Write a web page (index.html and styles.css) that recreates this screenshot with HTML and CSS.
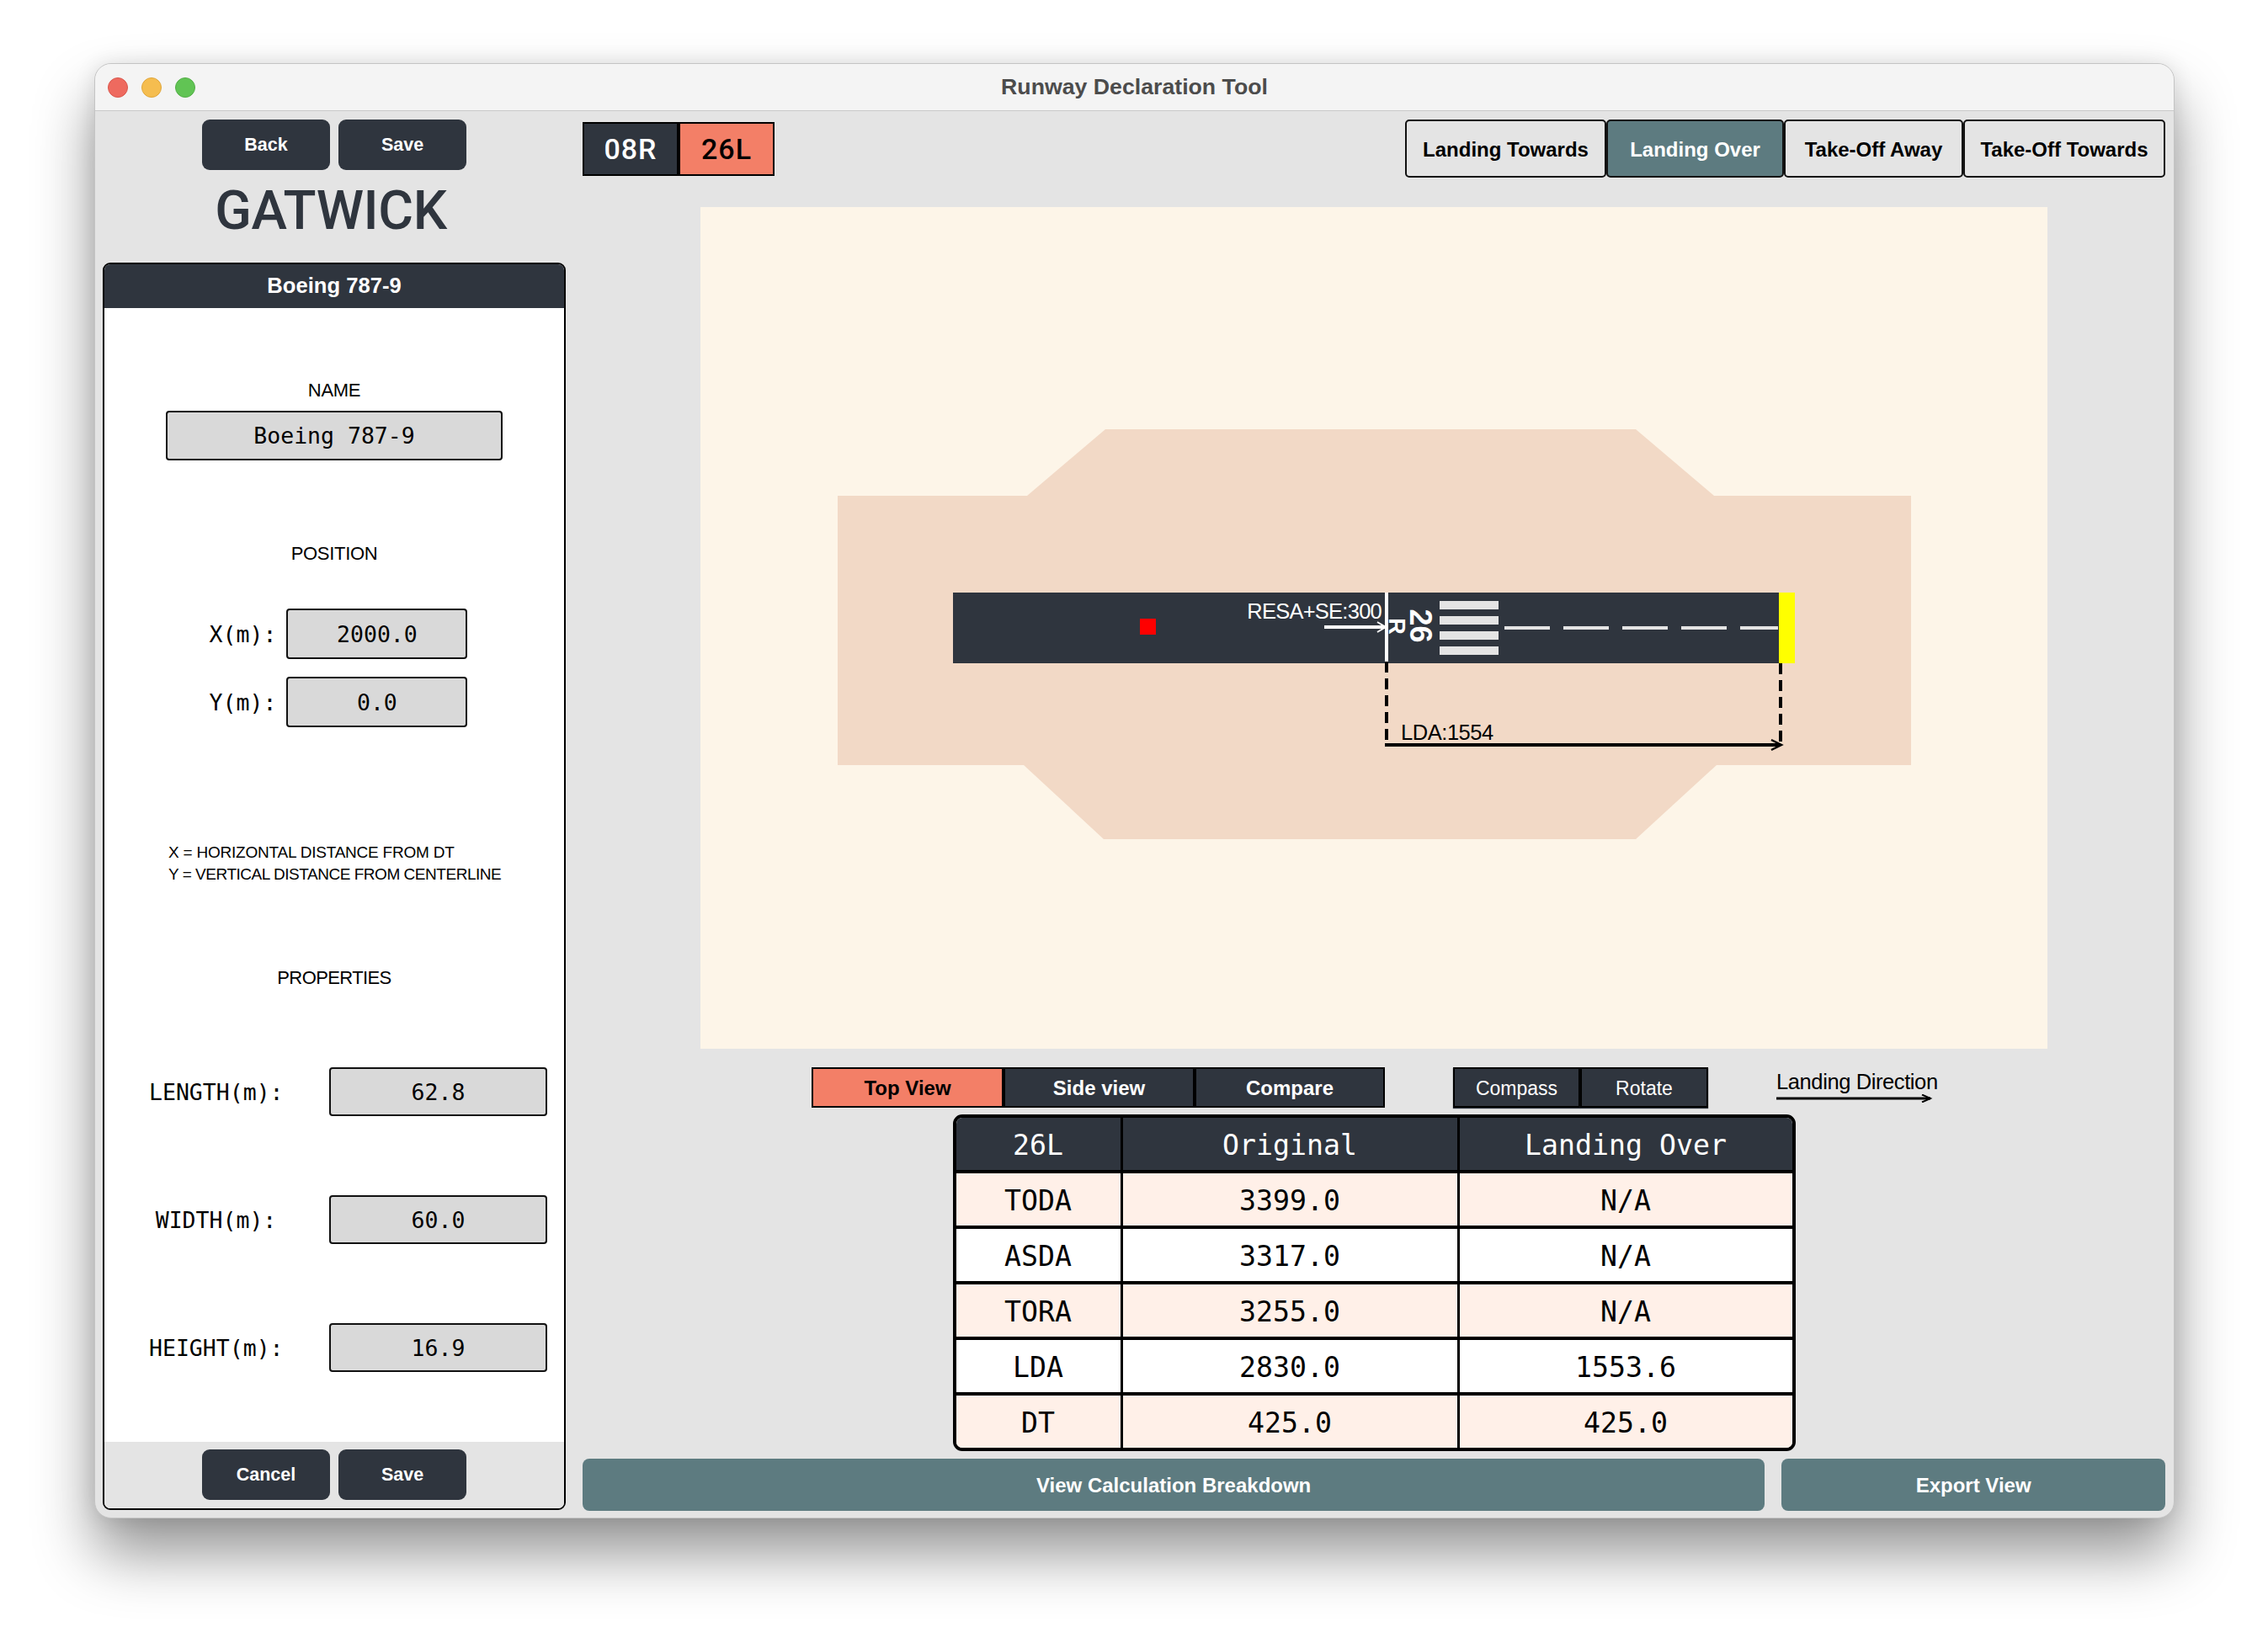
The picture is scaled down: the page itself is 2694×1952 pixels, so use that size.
FILE: index.html

```html
<!DOCTYPE html>
<html lang="en">
    <head>
        <meta charset="UTF-8" />
        <title>Runway Declaration Tool</title>
        <link rel="stylesheet" href="styles.css">
    </head>
    <body>
        <div class="window">
            <div class="titlebar">
                <div class="lights">
                    <span class="light red"></span>
                    <span class="light yellow"></span>
                    <span class="light green"></span>
                </div>
                <div class="window-title">Runway Declaration Tool</div>
            </div>

            <div class="content">
                <div class="sidebar">
                    <div class="btn-row">
                        <button class="dark-btn">Back</button>
                        <button class="dark-btn">Save</button>
                    </div>
                    <h1 class="airport">GATWICK</h1>

                    <div class="panel">
                        <div class="panel-head">Boeing 787-9</div>
                        <div class="panel-body">
                            <div class="caption name-caption">NAME</div>
                            <div class="field name-field">Boeing 787-9</div>

                            <div class="caption position-caption">POSITION</div>
                            <div class="pos-row first-pos">
                                <span class="mono-label">X(m):</span>
                                <div class="field pos-field">2000.0</div>
                            </div>
                            <div class="pos-row second-pos">
                                <span class="mono-label">Y(m):</span>
                                <div class="field pos-field">0.0</div>
                            </div>

                            <div class="note">
                                <div class="note-x">X = HORIZONTAL DISTANCE FROM DT</div>
                                <div class="note-y">Y = VERTICAL DISTANCE FROM CENTERLINE</div>
                            </div>

                            <div class="caption props-caption">PROPERTIES</div>
                            <div class="prop-row first-prop">
                                <span class="mono-label">LENGTH(m):</span>
                                <div class="field">62.8</div>
                            </div>
                            <div class="prop-row">
                                <span class="mono-label">WIDTH(m):</span>
                                <div class="field">60.0</div>
                            </div>
                            <div class="prop-row">
                                <span class="mono-label">HEIGHT(m):</span>
                                <div class="field">16.9</div>
                            </div>
                        </div>
                        <div class="panel-foot">
                            <button class="dark-btn">Cancel</button>
                            <button class="dark-btn">Save</button>
                        </div>
                    </div>
                </div>

                <div class="main">
                    <div class="top-row">
                        <div class="runway-toggle">
                            <div class="rw rw-off">08R</div>
                            <div class="rw rw-on">26L</div>
                        </div>
                        <div class="tabs">
                            <button class="tab">Landing Towards</button>
                            <button class="tab tab-on">Landing Over</button>
                            <button class="tab">Take-Off Away</button>
                            <button class="tab">Take-Off Towards</button>
                        </div>
                    </div>

                    <svg class="canvas" viewBox="832 246 1600 1000" xmlns="http://www.w3.org/2000/svg">
                        <rect x="832" y="246" width="1600" height="1000" fill="#fdf5e8"/>
                        <polygon fill="#f2d9c6" points="995,589 1220,589 1313,510 1943,510 2036,589 2270,589 2270,909 2039,909 1943,997 1311,997 1216,909 995,909"/>
                        <rect x="1132" y="704" width="982" height="84" fill="#2f353e"/>
                        <rect x="2113" y="704" width="19" height="84" fill="#ffff00"/>
                        <rect x="1354" y="735" width="19" height="19" fill="#ff0000"/>

                        <g fill="#e4e4e4">
                            <rect x="1710" y="714" width="70" height="10"/>
                            <rect x="1710" y="732" width="70" height="10"/>
                            <rect x="1710" y="750" width="70" height="10"/>
                            <rect x="1710" y="768" width="70" height="10"/>
                            <rect x="1787" y="744" width="54" height="4"/>
                            <rect x="1857" y="744" width="54" height="4"/>
                            <rect x="1927" y="744" width="54" height="4"/>
                            <rect x="1997" y="744" width="54" height="4"/>
                            <rect x="2067" y="744" width="45" height="4"/>
                        </g>

                        <text class="rw-num" transform="translate(1675,743.5) rotate(90)" font-size="36">26</text>
                        <text class="rw-num" transform="translate(1650,744) rotate(90)" font-size="27">R</text>

                        <line x1="1647" y1="704" x2="1647" y2="786" stroke="#fff" stroke-width="4"/>
                        <line x1="1573" y1="745" x2="1645" y2="745" stroke="#fff" stroke-width="4"/>
                        <polyline points="1636,739 1646,745 1636,751" fill="none" stroke="#fff" stroke-width="2"/>
                        <text class="dia-text resa-text" x="1641" y="735" text-anchor="end" fill="#fff">RESA+SE:300</text>

                        <line x1="1647" y1="786" x2="1647" y2="885" stroke="#000" stroke-width="4" stroke-dasharray="13 7"/>
                        <line x1="2115" y1="788" x2="2115" y2="885" stroke="#000" stroke-width="4" stroke-dasharray="13 7"/>
                        <line x1="1645" y1="885" x2="2115" y2="885" stroke="#000" stroke-width="4"/>
                        <polyline points="2104,879 2116,885 2104,891" fill="none" stroke="#000" stroke-width="2.5"/>
                        <text class="dia-text lda-text" x="1664" y="879" fill="#000">LDA:1554</text>
                    </svg>

                    <div class="view-row">
                        <div class="views">
                            <button class="seg seg-on">Top View</button>
                            <button class="seg">Side view</button>
                            <button class="seg">Compare</button>
                        </div>
                        <div class="tools">
                            <button class="seg seg-thin">Compass</button>
                            <button class="seg seg-thin">Rotate</button>
                        </div>
                        <div class="direction">
                            <div class="direction-text">Landing Direction</div>
                            <svg class="direction-arrow" viewBox="0 0 186 10" xmlns="http://www.w3.org/2000/svg">
                                <line x1="0" y1="5" x2="183" y2="5" stroke="#000" stroke-width="3"/>
                                <polyline points="173,0.5 183,5 173,9.5" fill="none" stroke="#000" stroke-width="2"/>
                            </svg>
                        </div>
                    </div>

                    <table class="dist-table">
                        <tr class="head">
                            <th>26L</th>
                            <th>Original</th>
                            <th>Landing Over</th>
                        </tr>
                        <tr class="tint"><td>TODA</td><td>3399.0</td><td>N/A</td></tr>
                        <tr><td>ASDA</td><td>3317.0</td><td>N/A</td></tr>
                        <tr class="tint"><td>TORA</td><td>3255.0</td><td>N/A</td></tr>
                        <tr><td>LDA</td><td>2830.0</td><td>1553.6</td></tr>
                        <tr class="tint"><td>DT</td><td>425.0</td><td>425.0</td></tr>
                    </table>

                    <div class="bottom-row">
                        <button class="teal-btn breakdown">View Calculation Breakdown</button>
                        <button class="teal-btn export">Export View</button>
                    </div>
                </div>
            </div>
        </div>
    </body>
</html>
```

FILE: styles.css

```css
html {
    height: 100%;
}

body {
    box-sizing: border-box;
    margin: 0;
    min-height: 1952px;
    padding: 75px 0 0 112px;
    background-color: #fff;
    font-family: "Liberation Sans", Arial, sans-serif;
    overflow: hidden;
}

button {
    font-family: "Liberation Sans", Arial, sans-serif;
    padding: 0;
    border: none;
}

.window {
    box-sizing: border-box;
    width: 2471px;
    height: 1729px;
    background-color: #e4e4e4;
    border: 1px solid #c4c4c4;
    border-radius: 20px;
    box-shadow: 0 42px 70px rgba(0, 0, 0, 0.42), 0 0 24px rgba(0, 0, 0, 0.1);
    overflow: hidden;
}

/* title bar */
.titlebar {
    box-sizing: border-box;
    height: 56px;
    display: flex;
    align-items: center;
    justify-content: center;
    position: relative;
    background-color: #f4f4f4;
    border-bottom: 1px solid #c8c8c8;
}

.lights {
    position: absolute;
    left: 15px;
    top: 16px;
    display: flex;
    gap: 16px;
}

.light {
    box-sizing: border-box;
    width: 24px;
    height: 24px;
    border-radius: 50%;
}

.red { background-color: #ee6a5f; border: 1px solid #d9574d; }
.yellow { background-color: #f5bd4f; border: 1px solid #dfa63c; }
.green { background-color: #61c454; border: 1px solid #53ad47; }

.window-title {
    font-size: 26.7px;
    font-weight: bold;
    color: #4c4c4c;
}

.content {
    display: flex;
}

/* left column */
.sidebar {
    box-sizing: border-box;
    width: 579px;
    padding: 10px 20px 0 9px;
}

.btn-row {
    display: flex;
    justify-content: center;
    gap: 10px;
}

.dark-btn {
    width: 152px;
    height: 60px;
    padding-top: 1px;
    background-color: #2f353e;
    color: #fff;
    font-size: 21.5px;
    font-weight: bold;
    border-radius: 9px;
}

.airport {
    margin: 0 8px 16px 0;
    height: 94px;
    padding-top: 2px;
    box-sizing: border-box;
    line-height: 94px;
    text-align: center;
    font-family: "Roboto", sans-serif;
    font-size: 64px;
    font-weight: 500;
    letter-spacing: -0.4px;
    color: #2f353e;
}

.panel {
    box-sizing: border-box;
    width: 550px;
    height: 1482px;
    display: flex;
    flex-direction: column;
    border: 2.5px solid #000;
    border-radius: 9px;
    overflow: hidden;
    background-color: #fff;
}

.panel-head {
    height: 52px;
    line-height: 50px;
    flex: none;
    text-align: center;
    background-color: #2f353e;
    color: #fff;
    font-size: 25.6px;
    font-weight: bold;
}

.panel-body {
    flex: 1;
    display: flex;
    flex-direction: column;
    align-items: center;
}

.caption {
    height: 30px;
    line-height: 30px;
    font-size: 22px;
    letter-spacing: -0.3px;
    color: #000;
}

.name-caption { margin-top: 83px; }
.name-caption + .name-field { margin-top: 9px; }
.position-caption { margin-top: 96px; }
.props-caption { margin-top: 95px; letter-spacing: -0.6px; }

.field {
    box-sizing: border-box;
    display: flex;
    align-items: center;
    justify-content: center;
    height: 59px;
    background-color: #d9d9d9;
    border: 2.5px solid #111;
    border-radius: 4px;
    font-family: "DejaVu Sans Mono", monospace;
    font-size: 26.5px;
    color: #000;
}

.name-field {
    width: 400px;
}

.mono-label {
    font-family: "DejaVu Sans Mono", monospace;
    font-size: 26.5px;
    color: #000;
    text-align: center;
    white-space: nowrap;
}

.pos-row {
    display: flex;
    align-items: center;
    gap: 12px;
    padding-left: 10px;
}

.first-pos { margin-top: 50px; }
.second-pos { margin-top: 21px; }

.pos-field {
    width: 215px;
    height: 60px;
}

.note {
    align-self: flex-start;
    margin: 136px 0 0 76px;
    font-size: 19px;
    line-height: 26px;
    color: #000;
}

.note-x { letter-spacing: -0.22px; }
.note-y { letter-spacing: -0.47px; }

.prop-row {
    align-self: flex-start;
    display: grid;
    grid-template-columns: 159px 259px;
    column-gap: 55px;
    align-items: center;
    margin: 94px 0 0 53px;
}

.first-prop { margin-top: 91px; }

.prop-row .field {
    height: 58px;
}

.panel-foot {
    flex: none;
    height: 79px;
    box-sizing: border-box;
    display: flex;
    justify-content: center;
    gap: 10px;
    padding-top: 9px;
    background-color: #e4e4e4;
}

/* main column */
.main {
    width: 1880px;
    padding-top: 10px;
}

.top-row {
    height: 69px;
    display: flex;
    align-items: center;
    justify-content: space-between;
}

.runway-toggle {
    display: flex;
    box-sizing: border-box;
    width: 228px;
    height: 64px;
    border: 2px solid #000;
}

.rw {
    flex: 1;
    display: flex;
    align-items: center;
    justify-content: center;
    font-family: "Roboto", sans-serif;
    font-size: 34px;
    font-weight: 500;
    letter-spacing: 1px;
}

.rw-off {
    background-color: #2f353e;
    color: #fff;
    border-right: 4px solid #000;
}

.rw-on {
    background-color: #f37f67;
    color: #000;
}

.tabs {
    display: grid;
    grid-template-columns: 239px 211px 213px 240px;
    height: 69px;
}

.tab {
    box-sizing: border-box;
    padding-top: 2px;
    background-color: #e4e4e4;
    border: 2.5px solid #111;
    border-radius: 5px;
    font-size: 24px;
    font-weight: bold;
    color: #000;
}

.tab-on {
    background-color: #5d7b80;
    color: #fff;
}

.canvas {
    display: block;
    width: 1600px;
    height: 1000px;
    margin: 35px auto 0;
}

.dia-text {
    font-family: "Liberation Sans", Arial, sans-serif;
    font-size: 25.5px;
}

.resa-text { letter-spacing: -0.75px; }
.lda-text { letter-spacing: -0.45px; }

.rw-num {
    font-family: "Liberation Sans", Arial, sans-serif;
    font-weight: bold;
    fill: #fff;
    text-anchor: middle;
}

.view-row {
    display: flex;
    gap: 81px;
    height: 48px;
    margin-top: 22px;
    padding-left: 272px;
}

.views,
.tools {
    display: grid;
    height: 48px;
    border: none;
}

.views { grid-template-columns: 228px 227px 226px; }
.tools { grid-template-columns: 151px 152px; }

.seg {
    box-sizing: border-box;
    padding-top: 2px;
    background-color: #2f353e;
    border: 2.5px solid #000;
    color: #fff;
    font-size: 24px;
    font-weight: bold;
}

.seg-on {
    background-color: #f37f67;
    color: #000;
}

.seg-thin {
    font-size: 23px;
    font-weight: normal;
    box-shadow: 0 1px 1px #2f353e;
}

.direction {
    width: 192px;
}

.direction-text {
    height: 34px;
    line-height: 34px;
    font-size: 25.5px;
    letter-spacing: -0.4px;
    white-space: nowrap;
}

.direction-arrow {
    display: block;
    width: 186px;
    height: 10px;
    margin-top: -2px;
}

/* distances table */
.dist-table {
    box-sizing: border-box;
    width: 1001px;
    height: 399px;
    margin: 8px auto 0;
    border-spacing: 0;
    table-layout: fixed;
    border: 4px solid #000;
    border-radius: 11px;
    font-family: "DejaVu Sans Mono", monospace;
    font-size: 33.2px;
    font-weight: normal;
    color: #000;
    background-color: #fff;
}

.dist-table th,
.dist-table td {
    height: 60px;
    padding: 2px 0 0;
    text-align: center;
    font-weight: normal;
    border-top: 4px solid #000;
    border-left: 3px solid #000;
}

.dist-table th:first-child,
.dist-table td:first-child {
    width: 195px;
    border-left: none;
}

.dist-table th:nth-child(2) { width: 397px; }

.dist-table tr.head th {
    border-top: none;
    background-color: #2f353e;
    color: #fff;
}

.dist-table tr.head th:first-child { border-top-left-radius: 7px; }
.dist-table tr.head th:last-child { border-top-right-radius: 7px; }

.tint td {
    background-color: #fff0e8;
}

.tint:last-child td:first-child { border-bottom-left-radius: 7px; }
.tint:last-child td:last-child { border-bottom-right-radius: 7px; }

.bottom-row {
    display: flex;
    gap: 20px;
    margin-top: 9px;
}

.teal-btn {
    height: 62px;
    padding-top: 1px;
    background-color: #5d7b80;
    color: #fff;
    font-size: 24px;
    font-weight: bold;
    border-radius: 8px;
}

.breakdown { width: 1405px; }
.export { width: 456px; }
```
